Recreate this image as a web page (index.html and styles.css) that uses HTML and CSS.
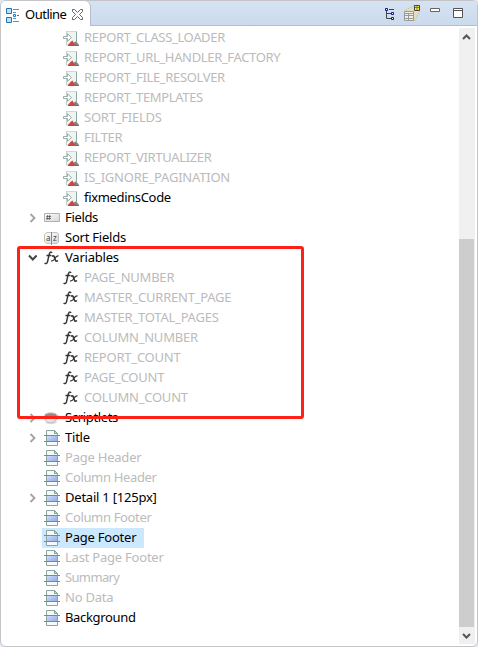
FILE: index.html
```
<!DOCTYPE html>
<html lang="en">
<head>
<meta charset="utf-8">
<title>Outline</title>
<link rel="stylesheet" href="styles.css">
</head>
<body>
<svg class="defs" width="0" height="0">
  <defs>
    <linearGradient id="blue" x1="0" y1="0" x2="1" y2="1"><stop offset="0" stop-color="#d4e2fa"/><stop offset="1" stop-color="#8fabe8"/></linearGradient>
    <linearGradient id="gray" x1="0" y1="0" x2="1" y2="1"><stop offset="0" stop-color="#fff"/><stop offset="1" stop-color="#d6d6d6"/></linearGradient>
    <symbol id="band" viewBox="0 0 16 16">
      <path d="M2.500.5h8l3 3v12h-11z" fill="#f5faf8" stroke="#8ba49f"/>
      <path d="M10.500.5v3h3z" fill="#c5dcd2" stroke="#7ba594"/>
      <path d="M3 5h10v6H3z" fill="url(#blue)"/>
      <path d="M0 5.500h16M0 11.500h16" stroke="#7087b5"/>
    </symbol>
    <symbol id="param" viewBox="0 0 16 16">
      <path d="M3.500 1v14h10V1l-1 1-1-1-1 1-1-1-1 1-1-1-1 1-1-1-1 1z" fill="#eef4f1" stroke="#c3d0cc"/>
      <path d="M13.500 2v10" stroke="#8ea8a0"/>
      <path d="M.5 6.500h4V3.800l4 3.700-4 3.700V8.500h-4z" fill="#fff" stroke="#93a4a2" stroke-width=".9"/>
      <path d="M10 15l1.500-3 1.500-.5 2 2 .8 1.500z" fill="#858080"/>
      <path d="M5 15l2.500-3 2-1.500 2.500 4.500z" fill="#cc4545"/>
      <path d="M5 15.500h11" stroke="#776868"/>
    </symbol>
    <symbol id="field" viewBox="0 0 16 16">
      <path d="M.5 3.500h15v8H.5z" fill="url(#gray)" stroke="#b0b0b0"/>
      <path d="M3.700 5 3 10M5.800 5 5.100 10M2.200 6.500h5M2 8.500h5" stroke="#555" stroke-width=".8"/>
    </symbol>
    <symbol id="sort" viewBox="0 0 16 16">
      <path d="M3 2.500h3.500l1 1 1-1H13L14.500 4v8L13 13.500H8.500l-1 1-1-1H3L.5 11.500v-7z" fill="url(#gray)" stroke="#c0c0c0"/>
      <path d="M7.500 2v13" stroke="#888"/>
      <text x="2" y="11" class="az">a</text><text x="9" y="11" class="az">z</text>
    </symbol>
    <symbol id="fx" viewBox="0 0 16 16">
      <path d="M8.200 2.800C6.500 1 5.400 2.800 4.900 5.500L3.600 11.500C3.100 13.600 2 14.200.6 13.100M2.500 5.500h4.800" fill="none" stroke="#333" stroke-width="1.400"/>
      <path d="M7.800 6.200c2-1.200 2.500.2 3 2.200.5 2.300 1.300 3.700 3.100 2.100" fill="none" stroke="#333" stroke-width="1.600"/>
      <path d="M14.600 6c-1.800-.6-3.300 1.600-4 2.700-.8 1.400-1.800 2.700-3.500 2" fill="none" stroke="#333" stroke-width="1.200"/>
    </symbol>
    <symbol id="cup" viewBox="0 0 16 16">
      <ellipse cx="7" cy="12" rx="6" ry="2" fill="#ddd"/>
      <path d="M12 5.500c4-1 4 3-.5 4" fill="none" stroke="#bbb"/>
      <path d="M.5 6c0 9 12.500 9 12.500 0z" fill="url(#gray)" stroke="#bbb"/>
      <ellipse cx="6.800" cy="5.500" rx="6.200" ry="2.700" fill="#9a8880" stroke="#ccc"/>
    </symbol>
    <symbol id="right" viewBox="0 0 10 10"><path d="M2.500 1 6.500 5l-4 4" fill="none" stroke="#a3a3a3" stroke-width="1.800"/></symbol>
    <symbol id="down" viewBox="0 0 10 10"><path d="M1 2.500l3.800 4 3.800-4" fill="none" stroke="#444" stroke-width="2"/></symbol>
  </defs>
</svg>
<main class="panel">
  <header class="bar">
    <div class="tab">
      <svg class="outline-icon" width="14" height="16" viewBox="0 0 14 16"><path d="M.5 1.500h5v5h-5zM.5 10.500h5v5h-5z" fill="#bfe0f8" stroke="#2272b5"/><path d="M7 2.500h6M7 5.500h3M7 11.500h3M7 14.500h6" stroke="#5795c4"/><path d="M7.500 7.500h2v2h-2zM11 8.500h2" fill="#fff" stroke="#2878b8"/></svg>
      <h1 class="tab-title">Outline</h1>
      <svg class="close" width="11" height="11" viewBox="0 0 11 11"><path d="M.5.5h2l3 3 3-3h2v2l-3 3 3 3v2h-2l-3-3-3 3h-2v-2l3-3-3-3z" fill="#fff" stroke="#555" stroke-width=".9"/></svg>
    </div>
    <div class="tools">
      <svg width="10" height="12" viewBox="0 0 10 12"><path d="M1.500 3v7.500H6M2 5.500h4M4 1.500h5" fill="none" stroke="#444"/><path d="M.5.5h2v2h-2zM6.500 4.500h2v2h-2zM6.500 9.500h2v2h-2z" fill="#fff" stroke="#15157a"/></svg>
      <svg class="palette" width="17" height="17" viewBox="0 0 17 17"><path d="M1 6 11 1l5 4-6 11z" fill="#e4dfb9"/><path d="M.5 6 10 .5M10.500 16 16 6" stroke="#c4b777" stroke-dasharray="1 1"/><path d="M.5 6.500h9v9h-9z" fill="#eee" stroke="#999"/><path d="M1 8.500h8M1 10.500h8M1 13.500h8M4.500 8v7" stroke="#999"/><path d="M10.500.5h5v5h-5z" fill="#ffec35" stroke="#444"/><path d="M11 2.500h4M13 1v4" stroke="#777"/></svg>
      <svg class="min" width="10" height="4" viewBox="0 0 10 4"><path d="M.5.5h9v3h-9z" fill="#fff" stroke="#666"/></svg>
      <svg class="max" width="10" height="10" viewBox="0 0 10 10"><path d="M.5.5h9v9h-9zM.5 2.500h9" fill="#fff" stroke="#555"/></svg>
    </div>
  </header>
  <section class="body">
    <ul class="tree">
      <li class="row child off tight"><svg class="icon"><use href="#param"/></svg><span>REPORT_CLASS_LOADER</span></li>
      <li class="row child off tight"><svg class="icon"><use href="#param"/></svg><span>REPORT_URL_HANDLER_FACTORY</span></li>
      <li class="row child off tight"><svg class="icon"><use href="#param"/></svg><span>REPORT_FILE_RESOLVER</span></li>
      <li class="row child off tight"><svg class="icon"><use href="#param"/></svg><span>REPORT_TEMPLATES</span></li>
      <li class="row child off"><svg class="icon"><use href="#param"/></svg><span>SORT_FIELDS</span></li>
      <li class="row child off tight"><svg class="icon"><use href="#param"/></svg><span>FILTER</span></li>
      <li class="row child off tight"><svg class="icon"><use href="#param"/></svg><span>REPORT_VIRTUALIZER</span></li>
      <li class="row child off"><svg class="icon"><use href="#param"/></svg><span>IS_IGNORE_PAGINATION</span></li>
      <li class="row child tight"><svg class="icon"><use href="#param"/></svg><span>fixmedinsCode</span></li>
      <li class="row tight"><svg class="arrow"><use href="#right"/></svg><svg class="icon"><use href="#field"/></svg><span>Fields</span></li>
      <li class="row leaf"><svg class="icon"><use href="#sort"/></svg><span>Sort Fields</span></li>
      <li class="row"><svg class="arrow"><use href="#down"/></svg><svg class="icon"><use href="#fx"/></svg><span>Variables</span></li>
      <li class="row child off"><svg class="icon"><use href="#fx"/></svg><span>PAGE_NUMBER</span></li>
      <li class="row child off"><svg class="icon"><use href="#fx"/></svg><span>MASTER_CURRENT_PAGE</span></li>
      <li class="row child off"><svg class="icon"><use href="#fx"/></svg><span>MASTER_TOTAL_PAGES</span></li>
      <li class="row child off"><svg class="icon"><use href="#fx"/></svg><span>COLUMN_NUMBER</span></li>
      <li class="row child off"><svg class="icon"><use href="#fx"/></svg><span>REPORT_COUNT</span></li>
      <li class="row child off"><svg class="icon"><use href="#fx"/></svg><span>PAGE_COUNT</span></li>
      <li class="row child off"><svg class="icon"><use href="#fx"/></svg><span>COLUMN_COUNT</span></li>
      <li class="row tight"><svg class="arrow"><use href="#right"/></svg><svg class="icon"><use href="#cup"/></svg><span>Scriptlets</span></li>
      <li class="row"><svg class="arrow"><use href="#right"/></svg><svg class="icon"><use href="#band"/></svg><span>Title</span></li>
      <li class="row leaf off"><svg class="icon"><use href="#band"/></svg><span>Page Header</span></li>
      <li class="row leaf off tight"><svg class="icon"><use href="#band"/></svg><span>Column Header</span></li>
      <li class="row"><svg class="arrow"><use href="#right"/></svg><svg class="icon"><use href="#band"/></svg><span>Detail 1 [125px]</span></li>
      <li class="row leaf off tight"><svg class="icon"><use href="#band"/></svg><span>Column Footer</span></li>
      <li class="row leaf selected"><svg class="icon"><use href="#band"/></svg><span>Page Footer</span></li>
      <li class="row leaf off"><svg class="icon"><use href="#band"/></svg><span>Last Page Footer</span></li>
      <li class="row leaf off tighter"><svg class="icon"><use href="#band"/></svg><span>Summary</span></li>
      <li class="row leaf off"><svg class="icon"><use href="#band"/></svg><span>No Data</span></li>
      <li class="row leaf tight"><svg class="icon"><use href="#band"/></svg><span>Background</span></li>
    </ul>
    <div class="scroll">
      <svg width="16" height="17" viewBox="0 0 16 17"><path d="M4 11l3.500-3.500L11 11" fill="none" stroke="#555" stroke-width="2"/></svg>
      <div class="thumb"></div>
      <svg width="16" height="17" viewBox="0 0 16 17"><path d="M4 7l3.500 3.500L11 7" fill="none" stroke="#555" stroke-width="2"/></svg>
    </div>
  </section>
  <div class="highlight"></div>
</main>
</body>
</html>
```
FILE: styles.css
```
* { box-sizing: border-box; }
body { margin: 0; background: #e3e8f8; font-family: "Noto Sans", sans-serif; font-size: 13px; color: #000; }
.defs { position: absolute; }
.panel { position: relative; width: 478px; height: 647px; border: 1px solid #c4c4c8; border-radius: 6px; background: #fff; overflow: hidden; display: flex; flex-direction: column; }
.bar { height: 25px; flex: none; display: flex; justify-content: space-between; background: linear-gradient(#d5e2f1, #cbdbed); border-bottom: 1px solid #b4bdce; }
.tab { height: 25px; width: 90px; display: flex; align-items: center; padding-left: 5px; background: #fff; border-right: 1px solid #b4bdce; border-top-right-radius: 6px; }
.tab-title { margin: 0 0 0 5px; width: 41px; font-size: 13px; font-weight: 400; line-height: 20px; letter-spacing: -0.5px; white-space: nowrap; }
.outline-icon { margin-top: 2px; }
.close { margin-left: 6px; margin-top: 1px; }
.tools { display: flex; align-items: flex-start; padding: 7px 14px 0 0; }
.palette { margin: -3px 0 0 9px; }
.min { margin-left: 9px; }
.max { margin-left: 13px; }
.body { flex: 1; display: flex; justify-content: space-between; padding-top: 2px; }
.tree { list-style: none; margin: 0; padding: 0 0 0 27px; }
.row { height: 20px; width: max-content; display: flex; align-items: center; line-height: 20px; letter-spacing: -0.22px; white-space: nowrap; }
.row span { margin-top: -2px; }
.tight { letter-spacing: -0.34px; }
.tighter { letter-spacing: -0.65px; }
.arrow { width: 10px; height: 10px; margin-right: 6px; }
.icon { width: 16px; height: 16px; margin-right: 5px; }
.leaf { margin-left: 14px; padding: 0 8px 0 2px; }
.child { padding-left: 35px; }
.off { color: #bbb; }
.selected { background: #cce8ff; }
.az { font: 8px "Noto Sans", sans-serif; letter-spacing: 0; fill: #444; }
.scroll { width: 16px; height: 616px; margin-right: 2px; background: #f0f0f0; display: flex; flex-direction: column; }
.thumb { width: 15px; height: 388px; margin-top: auto; background: #cdcdcd; }
.highlight { position: absolute; left: 16px; top: 245px; width: 287px; height: 173px; border: 3px solid #ff2116; border-radius: 3px; }
```
